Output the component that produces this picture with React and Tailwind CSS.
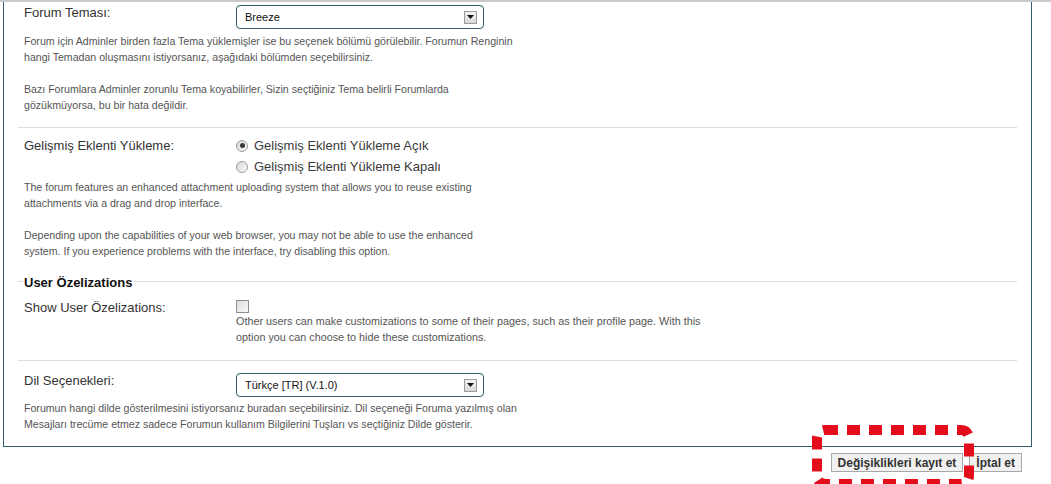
function Select({ value }) {
  return (
    <div className="flex items-center justify-between w-[248px] h-[24px] border border-[#2f5d69] rounded-[4px] bg-white pl-[8px] pr-[6px]">
      <span className="text-[11px] text-[#111]">{value}</span>
      <span className="flex items-center justify-center w-[13px] h-[13px] border border-[#9a9a9a] bg-gradient-to-b from-[#f4f4f4] to-[#d8d8d8]">
        <svg width="7" height="4" viewBox="0 0 7 4">
          <path d="M0 0 L7 0 L3.5 4 Z" fill="#111" />
        </svg>
      </span>
    </div>
  );
}

function Radio({ checked, label }) {
  return (
    <div className="flex items-center h-[21px]">
      <span className="flex items-center justify-center w-[12px] h-[12px] rounded-full border border-[#9c9c9c] bg-gradient-to-br from-[#d6d6d6] to-[#fbfbfb]">
        {checked && <span className="w-[5px] h-[5px] rounded-full bg-[#3a3a3a]" />}
      </span>
      <span className="ml-[6px] text-[13px] text-[#3a3a3a]">{label}</span>
    </div>
  );
}

function Desc({ children, className = '' }) {
  return <p className={`text-[10.6px] leading-[16px] text-[#555] ${className}`}>{children}</p>;
}

export default function App() {
  return (
    <div className="relative w-[1051px] h-[484px] overflow-hidden bg-white border-t-2 border-[#cacaca]" style={{ fontFamily: '"Liberation Sans", Arial, sans-serif' }}>
      <div className="ml-[3px] w-[1029px] border-l-[1.5px] border-r-[1.5px] border-b-[1.5px] border-[#2f5d69] px-[14px]">
        {/* Forum Teması */}
        <div className="pt-[3px] pb-[14px] px-[6px] border-b border-[#dcdcdc]">
          <div className="flex">
            <div className="w-[212px] text-[13px] leading-[16px] text-[#333]">Forum Teması:</div>
            <Select value="Breeze" />
          </div>
          <Desc className="mt-[4px]">
            Forum için Adminler birden fazla Tema yüklemişler ise bu seçenek bölümü görülebilir. Forumun Renginin
            <br />
            hangi Temadan oluşmasını istiyorsanız, aşağıdaki bölümden seçebilirsiniz.
            <br />
            <br />
            Bazı Forumlara Adminler zorunlu Tema koyabilirler, Sizin seçtiğiniz Tema belirli Forumlarda
            <br />
            gözükmüyorsa, bu bir hata değildir.
          </Desc>
        </div>

        {/* Gelişmiş Eklenti */}
        <div className="pt-[7px] px-[6px]">
          <div className="flex">
            <div className="w-[212px] h-[21px] flex items-center text-[13px] text-[#333]">Gelişmiş Eklenti Yükleme:</div>
            <div className="flex flex-col">
              <Radio checked label="Gelişmiş Eklenti Yükleme Açık" />
              <Radio label="Gelişmiş Eklenti Yükleme Kapalı" />
            </div>
          </div>
          <Desc className="mt-[2px]">
            The forum features an enhanced attachment uploading system that allows you to reuse existing
            <br />
            attachments via a drag and drop interface.
            <br />
            <br />
            Depending upon the capabilities of your web browser, you may not be able to use the enhanced
            <br />
            system. If you experience problems with the interface, try disabling this option.
          </Desc>
        </div>

        {/* User Özelizations */}
        <div className="flex items-center mt-[16px]">
          <span className="w-[6px] h-px bg-[#dcdcdc] mt-[-3px]" />
          <h3 className="text-[13px] leading-[16px] font-bold text-[#111] pr-[2px]">User Özelizations</h3>
          <span className="flex-1 h-px bg-[#dcdcdc] mt-[-3px]" />
        </div>
        <div className="pt-[9px] pb-[15px] px-[6px] border-b border-[#dcdcdc]">
          <div className="flex">
            <div className="w-[212px] text-[13px] leading-[16px] text-[#333]">Show User Özelizations:</div>
            <div className="flex flex-col">
              <span className="w-[13px] h-[13px] border border-[#8e8e8e] bg-gradient-to-br from-[#dcdcdc] to-[#fafafa]" />
              <p className="text-[10.8px] leading-[16px] text-[#555]">
                Other users can make customizations to some of their pages, such as their profile page. With this
                <br />
                option you can choose to hide these customizations.
              </p>
            </div>
          </div>
        </div>

        {/* Dil Seçenekleri */}
        <div className="pt-[12px] pb-[14px] px-[6px]">
          <div className="flex">
            <div className="w-[212px] text-[13px] leading-[16px] text-[#333]">Dil Seçenekleri:</div>
            <Select value="Türkçe [TR] (V.1.0)" />
          </div>
          <Desc className="mt-[3px]">
            Forumun hangi dilde gösterilmesini istiyorsanız buradan seçebilirsiniz. Dil seçeneği Foruma yazılmış olan
            <br />
            Mesajları trecüme etmez sadece Forumun kullanım Bilgilerini Tuşları vs seçtiğiniz Dilde gösterir.
          </Desc>
        </div>
      </div>

      <div className="flex justify-end gap-[6px] mt-[6px] pr-[29px]">
        <button className="h-[19px] px-[6px] border border-[#a8a8a8] bg-[#f1f1f1] text-[12px] font-bold text-[#333] leading-none">
          Değişiklikleri kayıt et
        </button>
        <button className="h-[19px] px-[6px] border border-[#a8a8a8] bg-[#f1f1f1] text-[12px] font-bold text-[#333] leading-none">
          İptal et
        </button>
      </div>

      <svg className="absolute left-[810px] top-[421px]" width="172" height="70" viewBox="0 0 172 70">
        <defs>
          <filter id="soft" x="-10%" y="-10%" width="120%" height="120%">
            <feGaussianBlur stdDeviation="0.6" />
          </filter>
        </defs>
        <rect x="7" y="7" width="152" height="54" rx="8" fill="none" stroke="#e3101e" strokeWidth="10" strokeDasharray="13 9" filter="url(#soft)" />
      </svg>
    </div>
  );
}
